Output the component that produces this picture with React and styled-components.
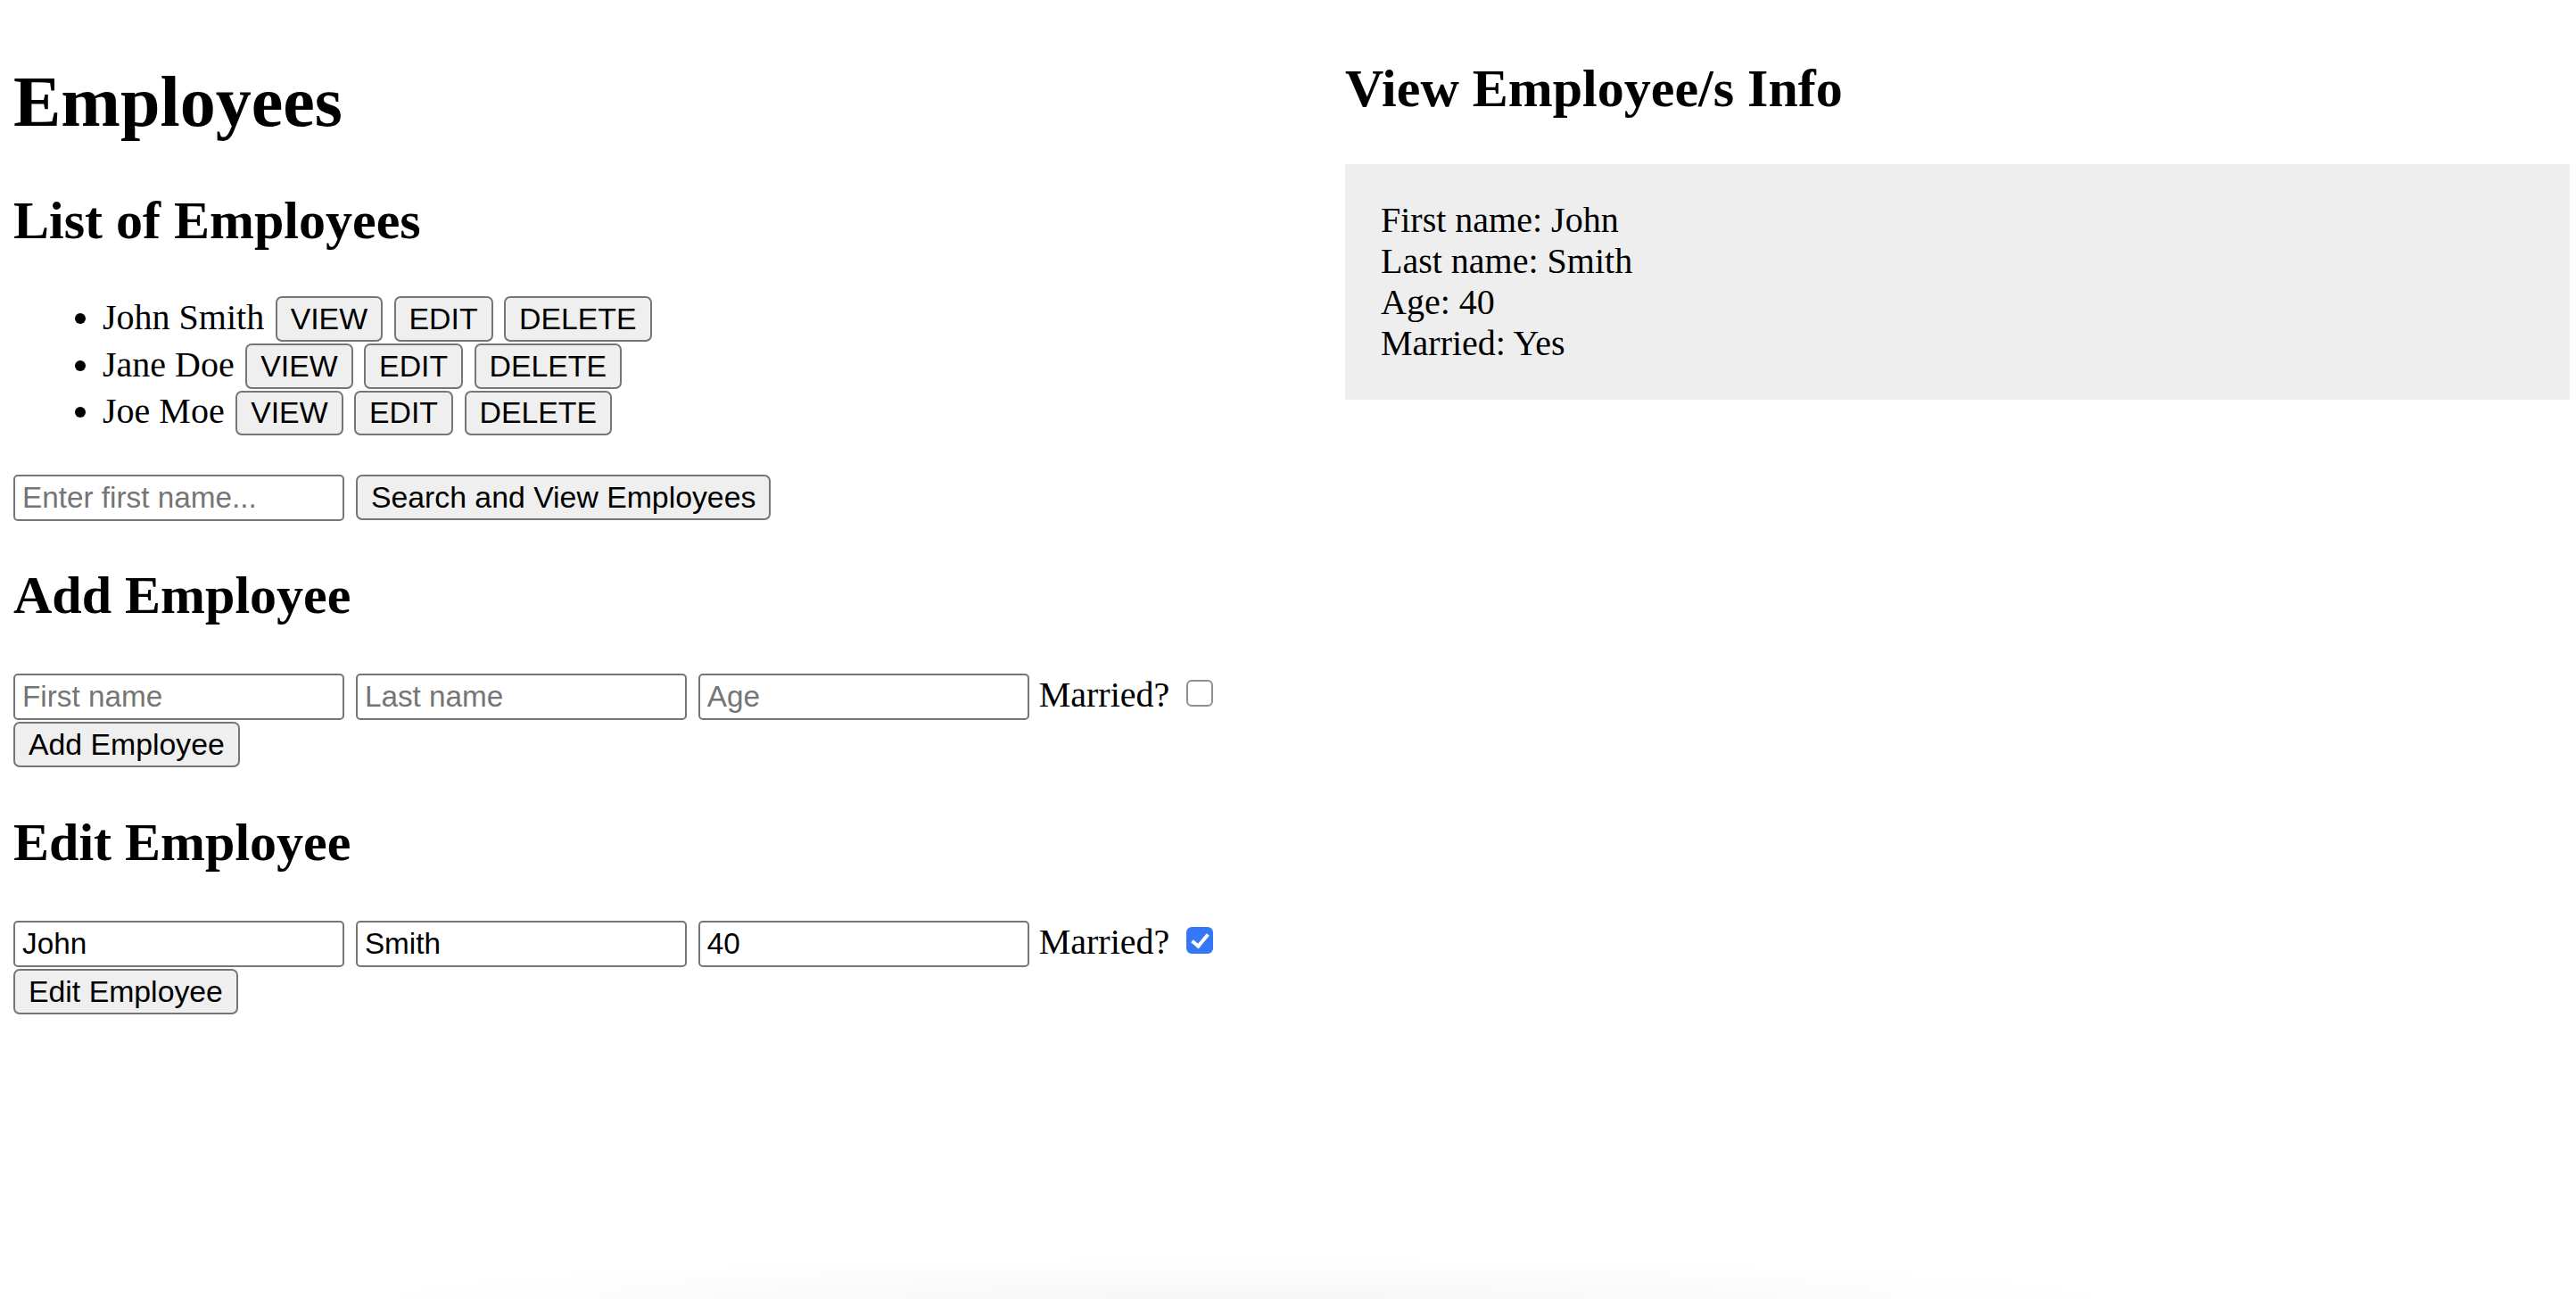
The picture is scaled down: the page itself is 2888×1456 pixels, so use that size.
import React from "react";
import styled, { createGlobalStyle } from "styled-components";

const GlobalStyle = createGlobalStyle`
  html, body { padding: 0; background: #ffffff; }
  body {
    margin: 15px 7px 15px 15px;
    font-family: "Liberation Serif", "Times New Roman", serif;
    font-size: 40px;
    color: #000000;
  }
`;

const Page = styled.div`
  display: flex;
  align-items: flex-start;
`;

const LeftColumn = styled.main`
  flex: none;
  width: 1493px;
`;

const RightColumn = styled.aside`
  flex: 1;
  min-width: 0;
`;

const Title = styled.h1`
  font-size: 80px;
  font-weight: bold;
  line-height: normal;
  margin: 53.6px 0;
`;

const SectionTitle = styled.h2`
  font-size: 60px;
  font-weight: bold;
  line-height: normal;
  margin: 49.8px 0;
`;

const EmployeeList = styled.ul`
  margin: 40px 0 41.5px;
  padding-left: 100px;
  list-style: disc;
`;

const EmployeeItem = styled.li`
  line-height: normal;
  padding-bottom: 1.8px;
`;

const EmployeeRow = styled.span`
  display: inline-flex;
  align-items: baseline;
  gap: 12.5px;
  vertical-align: baseline;
`;

const Name = styled.span``;

const Button = styled.button`
  box-sizing: border-box;
  height: ${(p) => (p.$tall ? "51.7px" : "50.8px")};
  margin: 0;
  padding: 0 15px;
  font-family: "Liberation Sans", Arial, Helvetica, sans-serif;
  font-size: 33.8px;
  line-height: normal;
  color: #000000;
  background: #efefef;
  border: 2px solid #767676;
  border-radius: 7px;
  white-space: nowrap;
`;

const SearchRow = styled.div`
  display: flex;
  align-items: baseline;
  gap: 12.5px;
  height: 51.5px;
`;

const FieldRow = styled.div`
  box-sizing: border-box;
  display: flex;
  align-items: baseline;
  gap: 12.5px;
  height: 56.9px;
  padding-top: 3.6px;
`;

const TextField = styled.input`
  box-sizing: border-box;
  width: 371.4px;
  height: 52px;
  margin: 0;
  padding: 0 5px 0 8px;
  font-family: "Liberation Sans", Arial, Helvetica, sans-serif;
  font-size: 33.3px;
  color: #000000;
  background: #ffffff;
  border: 2px solid #767676;
  border-radius: 5px;
  outline: none;
  &::placeholder { color: #757575; opacity: 1; }
`;

const FieldLabel = styled.span`
  margin-left: -2px;
`;

const CheckBox = styled.input.attrs({ type: "checkbox" })`
  appearance: none;
  -webkit-appearance: none;
  box-sizing: border-box;
  align-self: flex-start;
  position: relative;
  width: 30px;
  height: 30px;
  margin: 6.7px 0 0 6px;
  border-radius: 6px;
  border: 2px solid ${(p) => (p.checked ? "#3478f6" : "#8e8e8e")};
  background: ${(p) => (p.checked ? "#3478f6" : "#ffffff")};
  &::after {
    content: "";
    display: ${(p) => (p.checked ? "block" : "none")};
    position: absolute;
    left: 8px;
    top: 2px;
    width: 7px;
    height: 15px;
    border: solid #ffffff;
    border-width: 0 4px 4px 0;
    transform: rotate(40deg);
  }
`;

const Form = styled.form`
  margin: 0;
`;

const InfoPanel = styled.div`
  background: #eeeeee;
  padding: 40px;
`;

const InfoLine = styled.div`
  line-height: 46px;
`;

const BottomShade = styled.div`
  position: fixed;
  left: 430px;
  bottom: 0;
  width: 1930px;
  height: 46px;
  pointer-events: none;
  background: radial-gradient(ellipse 52% 100% at 50% 100%, rgba(0, 0, 0, 0.035), rgba(0, 0, 0, 0) 100%);
`;

const employees = [
  { first: "John", last: "Smith" },
  { first: "Jane", last: "Doe" },
  { first: "Joe", last: "Moe" },
];

export default function App() {
  return (
    <>
      <GlobalStyle />
      <Page>
        <LeftColumn>
          <Title>Employees</Title>
          <SectionTitle>List of Employees</SectionTitle>
          <EmployeeList>
            {employees.map((e) => (
              <EmployeeItem key={e.first}>
                <EmployeeRow>
                  <Name>
                    {e.first} {e.last}
                  </Name>
                  <Button type="button">VIEW</Button>
                  <Button type="button">EDIT</Button>
                  <Button type="button">DELETE</Button>
                </EmployeeRow>
              </EmployeeItem>
            ))}
          </EmployeeList>
          <SearchRow>
            <TextField placeholder="Enter first name..." />
            <Button type="button" $tall>Search and View Employees</Button>
          </SearchRow>

          <SectionTitle>Add Employee</SectionTitle>
          <Form onSubmit={(ev) => ev.preventDefault()}>
            <FieldRow>
              <TextField placeholder="First name" />
              <TextField placeholder="Last name" />
              <TextField placeholder="Age" />
              <FieldLabel>Married?</FieldLabel>
              <CheckBox readOnly checked={false} />
            </FieldRow>
            <Button type="submit" $tall>Add Employee</Button>
          </Form>

          <SectionTitle>Edit Employee</SectionTitle>
          <Form onSubmit={(ev) => ev.preventDefault()}>
            <FieldRow>
              <TextField defaultValue="John" />
              <TextField defaultValue="Smith" />
              <TextField defaultValue="40" />
              <FieldLabel>Married?</FieldLabel>
              <CheckBox readOnly checked={true} />
            </FieldRow>
            <Button type="submit" $tall>Edit Employee</Button>
          </Form>
        </LeftColumn>

        <RightColumn>
          <SectionTitle>View Employee/s Info</SectionTitle>
          <InfoPanel>
            <InfoLine>First name: John</InfoLine>
            <InfoLine>Last name: Smith</InfoLine>
            <InfoLine>Age: 40</InfoLine>
            <InfoLine>Married: Yes</InfoLine>
          </InfoPanel>
        </RightColumn>
      </Page>
      <BottomShade />
    </>
  );
}
